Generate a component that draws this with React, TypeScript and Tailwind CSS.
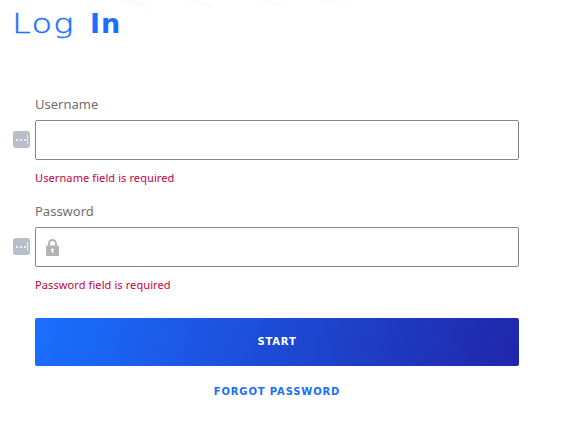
function DotsBadge() {
  return (
    <div className="absolute left-[-23px] top-[10px] flex h-[17px] w-[17px] items-center justify-end gap-[2px] rounded-[3px] bg-[#b9bec9]">
      <span className="h-[2px] w-[2px] rounded-full bg-white" />
      <span className="h-[2px] w-[2px] rounded-full bg-white" />
      <span className="h-[2px] w-[2px] rounded-full bg-white" />
      <span className="ml-[-1px] mr-[2px] h-[9px] w-[1px] bg-white/70" />
    </div>
  );
}

function LockIcon() {
  return (
    <svg className="absolute left-[10px] top-[11px]" width="13" height="17" viewBox="0 0 13 17">
      <path d="M3 7V4.5a3.5 3.5 0 0 1 7 0V7" fill="none" stroke="#b3b3b3" strokeWidth="2" />
      <path
        fillRule="evenodd"
        d="M1 6.5h11a1 1 0 0 1 1 1V16a1 1 0 0 1-1 1H1a1 1 0 0 1-1-1V7.5a1 1 0 0 1 1-1ZM6.5 9.5a1.4 1.4 0 0 0-.7 2.6V14h1.4v-1.9a1.4 1.4 0 0 0-.7-2.6Z"
        fill="#b3b3b3"
      />
    </svg>
  );
}

function Field({ label, error, locked }: { label: string; error: string; locked?: boolean }) {
  return (
    <div className="flex flex-col">
      <label className="h-[25px] text-[13px] leading-[19px] text-[#707070]">{label}</label>
      <div className="relative h-[40px] rounded-[2px] border border-[#85868c] bg-white">
        <DotsBadge />
        {locked && <LockIcon />}
      </div>
      <p className="mt-[9px] h-[18px] text-[11px] leading-[18px] tracking-[0.1px] text-[#c4003f]">{error}</p>
    </div>
  );
}

export default function App() {
  return (
    <div className="relative h-[427px] w-[577px] overflow-hidden bg-white font-['Noto_Sans','Open_Sans',sans-serif]">
      {/* faint streaks behind the title */}
      <svg className="absolute left-0 top-0" width="577" height="30" viewBox="0 0 577 30">
        <g fill="#fbfbfb">
          <path d="M120 0h14l24 12z" />
          <path d="M185 0h14l20 10z" />
          <path d="M255 0h14l22 10z" />
          <path d="M317 0h14l22 10z" />
        </g>
      </svg>
      <h1 className="relative ml-[12px] pt-[6px] font-['DejaVu_Sans',sans-serif] text-[27px] leading-[36px] tracking-[1px] text-[#1a6fff]">
        <span className="inline-block w-[78px] origin-left scale-x-[1.25] font-extralight [-webkit-text-stroke:0.4px_#1a6fff]">Log</span>
        <span className="font-bold">In</span>
      </h1>
      <form className="ml-[35px] mt-[53px] flex w-[484px] flex-col gap-[15px]">
        <Field label="Username" error="Username field is required" />
        <Field label="Password" error="Password field is required" locked />
        <button
          type="button"
          className="mt-[9px] h-[48px] rounded-[2px] bg-[linear-gradient(105deg,#1a6fff,#2026ab)] pb-[2px] font-['DejaVu_Sans',sans-serif] text-[10px] font-bold tracking-[0.8px] text-white"
        >
          START
        </button>
        <a className="text-center font-['DejaVu_Sans',sans-serif] text-[10px] font-bold leading-[22px] tracking-[0.85px] text-[#1a6fff]">
          FORGOT PASSWORD
        </a>
      </form>
    </div>
  );
}
